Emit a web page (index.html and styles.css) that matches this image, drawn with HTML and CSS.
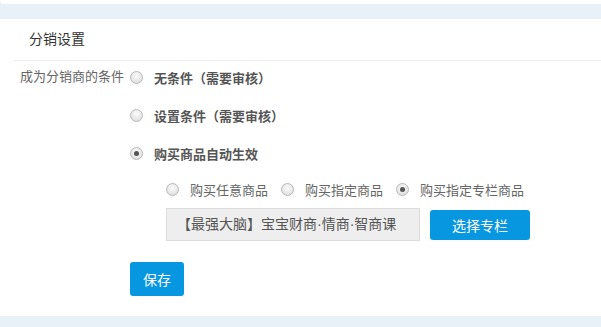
FILE: index.html
```html
<!DOCTYPE html>
<html lang="zh-CN">
<head>
    <meta charset="UTF-8">
    <title>分销设置</title>
    <link rel="stylesheet" href="styles.css">
</head>
<body>
    <div class="top-strip"></div>

    <div class="panel">
        <div class="panel-title">分销设置</div>

        <form class="dist-form">
            <div class="form-row">
                <div class="form-label">成为分销商的条件</div>
                <div class="form-options">
                    <label class="opt opt-bold"><span class="radio"></span>无条件（需要审核）</label>
                    <label class="opt opt-bold"><span class="radio"></span>设置条件（需要审核）</label>
                    <label class="opt opt-bold"><span class="radio checked"></span>购买商品自动生效</label>

                    <div class="sub-block">
                        <div class="sub-options">
                            <label class="opt sub-opt"><span class="radio"></span>购买任意商品</label>
                            <label class="opt sub-opt"><span class="radio"></span>购买指定商品</label>
                            <label class="opt sub-opt"><span class="radio checked"></span>购买指定专栏商品</label>
                        </div>
                        <div class="pick-row">
                            <div class="picked">【最强大脑】宝宝财商·情商·智商课</div>
                            <button type="button" class="btn btn-pick">选择专栏</button>
                        </div>
                    </div>

                    <button type="button" class="btn btn-save">保存</button>
                </div>
            </div>
        </form>
    </div>

    <div class="bottom-strip"></div>
</body>
</html>
```

FILE: styles.css
```css
body { margin: 0; background: #e8f0f8; font-family: "Liberation Sans", "Noto Sans CJK SC", sans-serif; color: #666; }
.top-strip { height: 4px; background: #fff; border-radius: 0 0 0 6px; margin-bottom: 15px; }
.panel { background: #fff; padding-bottom: 20px; }
.panel-title { height: 41px; line-height: 41px; font-size: 14px; color: #333; border-bottom: 1px solid #eee; margin-left: 14px; padding-left: 15px; }
.dist-form { padding-left: 20px; }
.form-row { display: flex; }
.form-label { width: 110px; height: 32px; line-height: 32px; font-size: 13px; color: #666; }
.form-options { display: flex; flex-direction: column; gap: 6px; align-items: flex-start; }
.opt { display: flex; align-items: center; height: 32px; font-size: 13px; cursor: pointer; }
.opt-bold { font-weight: bold; color: #555; }
.radio { width: 11px; height: 11px; border: 1px solid #b9b9b9; border-radius: 50%; background: radial-gradient(circle at 50% 35%, #fbfbfb, #d9d9d9); margin-right: 11px; box-sizing: content-box; position: relative; }
.radio.checked::after { content: ""; position: absolute; left: 3px; top: 3px; width: 5px; height: 5px; border-radius: 50%; background: #555; }
.sub-block { margin-left: 36px; margin-top: -2px; }
.sub-options { display: flex; }
.sub-opt { margin-right: 13px; color: #666; }
.pick-row { display: flex; align-items: center; gap: 10px; margin-top: 3px; }
.picked { width: 232px; height: 31px; line-height: 31px; padding-left: 10px; padding-right: 10px; background: #eee; border: 1px solid #ddd; font-size: 14px; color: #555; white-space: nowrap; }
.btn { border: none; border-radius: 3px; background: #0796e0; color: #fff; font-family: inherit; font-size: 14px; cursor: pointer; }
.btn-pick { width: 100px; height: 30px; }
.btn-save { width: 54px; height: 34px; margin-top: 15px; }
.bottom-strip { height: 11px; }
```
